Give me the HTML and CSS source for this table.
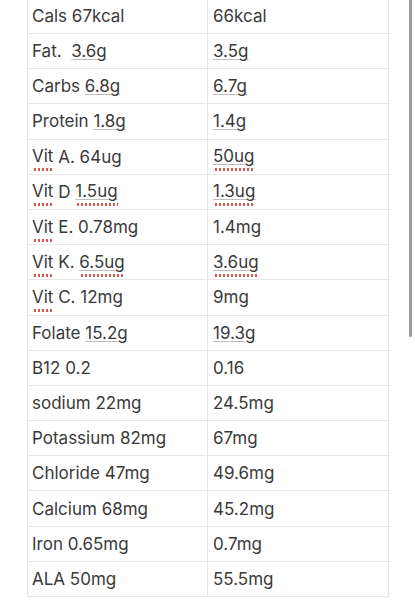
FILE: index.html
```html
<!DOCTYPE html>
<html>
<head>
<meta charset="utf-8">
<link rel="stylesheet" href="styles.css">
</head>
<body>
<div class="table">
  <div class="row"><div class="cell">Cals 67kcal</div><div class="cell">66kcal</div></div>
  <div class="row"><div class="cell">Fat.&nbsp; <span class="dd">3.6g</span></div><div class="cell"><span class="dd">3.5g</span></div></div>
  <div class="row"><div class="cell">Carbs <span class="dd">6.8g</span></div><div class="cell"><span class="dd">6.7g</span></div></div>
  <div class="row"><div class="cell">Protein <span class="dd">1.8g</span></div><div class="cell"><span class="dd">1.4g</span></div></div>
  <div class="row"><div class="cell"><span class="sp">Vit</span> A. 64ug</div><div class="cell"><span class="sp"><span class="dd">50ug</span></span></div></div>
  <div class="row"><div class="cell"><span class="sp">Vit</span> D <span class="sp"><span class="dd">1.5ug</span></span></div><div class="cell"><span class="sp"><span class="dd">1.3ug</span></span></div></div>
  <div class="row"><div class="cell"><span class="sp">Vit</span> E. 0.78mg</div><div class="cell">1.4mg</div></div>
  <div class="row"><div class="cell"><span class="sp">Vit</span> K. <span class="sp"><span class="dd">6.5ug</span></span></div><div class="cell"><span class="sp"><span class="dd">3.6ug</span></span></div></div>
  <div class="row"><div class="cell"><span class="sp">Vit</span> C. 12mg</div><div class="cell">9mg</div></div>
  <div class="row"><div class="cell">Folate <span class="dd">15.2g</span></div><div class="cell"><span class="dd">19.3g</span></div></div>
  <div class="row"><div class="cell">B12 0.2</div><div class="cell">0.16</div></div>
  <div class="row"><div class="cell">sodium 22mg</div><div class="cell">24.5mg</div></div>
  <div class="row"><div class="cell">Potassium 82mg</div><div class="cell">67mg</div></div>
  <div class="row"><div class="cell">Chloride 47mg</div><div class="cell">49.6mg</div></div>
  <div class="row"><div class="cell">Calcium 68mg</div><div class="cell">45.2mg</div></div>
  <div class="row"><div class="cell">Iron 0.65mg</div><div class="cell">0.7mg</div></div>
  <div class="row"><div class="cell">ALA 50mg</div><div class="cell">55.5mg</div></div>
</div>
<div class="scrollbar"></div>
</body>
</html>
```
FILE: styles.css
```css
html, body {
  margin: 0;
  padding: 0;
  background: #ffffff;
}
body {
  font-family: Inter, "Noto Sans", sans-serif;
  font-size: 17px;
  color: #3a3a3a;
  overflow: hidden;
}
.table {
  margin: -2.2px 0 0 27px;
  width: 362px;
  border-top: 1px solid #e6e6e6;
  border-left: 1px solid #e6e6e6;
}
.row {
  display: flex;
  height: 35.2px;
  box-sizing: border-box;
  border-bottom: 1px solid #e6e6e6;
}
.cell {
  box-sizing: border-box;
  display: flex;
  align-items: center;
  padding-left: 4px;
  border-right: 1px solid #e6e6e6;
  white-space: pre;
}
.cell:first-child {
  width: 180px;
}
.cell:last-child {
  width: 181px;
  padding-left: 5px;
}
.dd {
  text-decoration: underline;
  text-decoration-color: #bdbdbd;
  text-decoration-thickness: 1px;
  text-underline-offset: 2px;
}
.sp {
  display: inline-block;
  line-height: 19px;
  padding-bottom: 5px;
  margin-bottom: -5px;
  background-image: radial-gradient(circle, #d6504a 1.1px, transparent 1.4px);
  background-size: 4px 3px;
  background-repeat: repeat-x;
  background-position: 1px 100%;
}
.scrollbar {
  position: fixed;
  top: 0;
  left: 408.5px;
  width: 3.5px;
  height: 337px;
  background: #9a9a9a;
  border-radius: 0 0 2px 2px;
}
```
